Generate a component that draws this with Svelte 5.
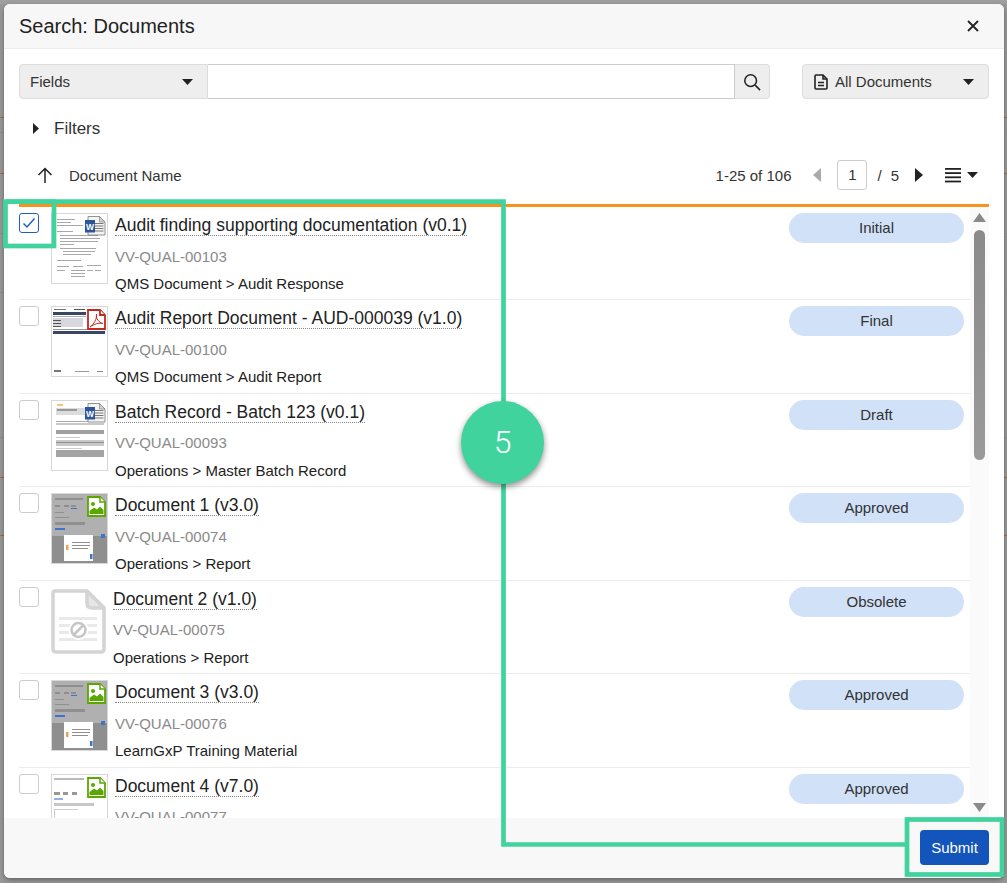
<script>
  const docs = [
    { title: 'Audit finding supporting documentation (v0.1)', id: 'VV-QUAL-00103', path: 'QMS Document > Audit Response', status: 'Initial', thumb: 'audit', icon: 'word', checked: true },
    { title: 'Audit Report Document - AUD-000039 (v1.0)', id: 'VV-QUAL-00100', path: 'QMS Document > Audit Report', status: 'Final', thumb: 'report', icon: 'pdf' },
    { title: 'Batch Record - Batch 123 (v0.1)', id: 'VV-QUAL-00093', path: 'Operations > Master Batch Record', status: 'Draft', thumb: 'batch', icon: 'word' },
    { title: 'Document 1 (v3.0)', id: 'VV-QUAL-00074', path: 'Operations > Report', status: 'Approved', thumb: 'screen', icon: 'image' },
    { title: 'Document 2 (v1.0)', id: 'VV-QUAL-00075', path: 'Operations > Report', status: 'Obsolete', thumb: 'none' },
    { title: 'Document 3 (v3.0)', id: 'VV-QUAL-00076', path: 'LearnGxP Training Material', status: 'Approved', thumb: 'screen', icon: 'image' },
    { title: 'Document 4 (v7.0)', id: 'VV-QUAL-00077', path: 'Operations > Report', status: 'Approved', thumb: 'light', icon: 'image' }
  ];
  const auditLines = [[6,6,18],[6,9,14],[6,12,26],[6,18,16],[9,22,38],[9,25,40],[9,28,38],[9,31,14],[9,35,36],[12,38,32],[12,41,28],[6,47,24],[6,53,12],[22,53,10],[36,52,8],[44,52,6],[6,57,8],[20,57,14],[36,57,6],[44,57,6],[20,60,14],[20,63,14]];
  const reportBars = [[3,3,12,1,'#777'],[23,3,11,1,'#555'],[2,6,33,3,'#3a4763'],[2,10,33,1,'#aab'],[2,12,30,9,'#d6d8dd'],[2,14,8,1,'#555'],[2,17,8,1,'#555'],[2,20,8,1,'#555'],[2,23,52,1,'#999'],[2,25,52,3,'#3a4763'],[3,64,7,2,'#777'],[24,65,14,1,'#999'],[46,65,6,1,'#888']];
  const batchBars = [[6,4,6,2,'#f5c27a'],[5,8,29,7,'#dcdcdc'],[6,9,20,2,'#999'],[5,21,34,1,'#aaa'],[5,23,48,2,'#c8c8c8'],[5,30,48,4,'#a0a0a0'],[5,37,24,1,'#ccc'],[5,40,48,6,'#c8c8c8'],[5,42,48,1,'#8f8f8f'],[5,48,26,1,'#ccc'],[5,50,48,7,'#a4a4a4']];
  const lightBars = [[3,4,30,2,'#bbb'],[3,18,6,3,'#999'],[12,18,5,3,'#999'],[21,18,5,3,'#999'],[3,24,9,2,'#8fb0e8'],[3,29,40,3,'#c8c8c8'],[3,35,24,1,'#ccc'],[3,35,1,20,'#ccc']];
  const listBars = [0, 1, 2, 3];
</script>

{#snippet fileIcon(kind)}
  {#if kind === 'word'}
    <path class="sheet" d="M37 3.500H48.500L54 9V22H37Z" />
    <path class="fold" d="M48.500 3.500V9H54Z" />
    {#each [10, 12.5, 15, 17.5] as y}<rect class="sheet-line" x="44" {y} width="8.500" height="1" />{/each}
    <rect class="word-box" x="34" y="7" width="10" height="12.500" />
    <text class="word-w" x="39" y="16.500">W</text>
  {:else if kind === 'pdf'}
    <path class="pdf-sheet" d="M37 4H49L54 9V23H37Z" />
    <path class="pdf-sheet" d="M49 4V9H54" />
    <path class="pdf-mark" d="M39 21C43 18 46 13 45.500 8C44.500 12 48 17 52 17.500C48 16.500 43 18 39 21Z" />
  {:else if kind === 'image'}
    <path class="img-sheet" d="M37 4H49L54 9V23H37Z" />
    <path class="img-fold" d="M49 4V9H54" />
    <circle class="img-fill" cx="42" cy="11" r="2" />
    <path class="img-fill" d="M38.500 21V18L43 14.500L46 16.500L49 13.500L52.500 17V21Z" />
  {/if}
{/snippet}

{#snippet thumbnail(doc)}
  {#if doc.thumb === 'none'}
    <svg class="blank" viewBox="0 0 55 65" aria-hidden="true">
      <path class="blank-page" d="M4 2H36L53 19V60Q53 63 50 63H5Q2 63 2 60V4Q2 2 4 2Z" />
      <path class="blank-fold" d="M36 2V14Q36 19 41 19H53Z" />
      {#each [28, 35, 42, 49] as y}<rect class="blank-line" x="8" {y} width="38" height="3" />{/each}
      <circle class="blank-white" cx="27.500" cy="41" r="10" />
      <circle class="blank-no" cx="27.500" cy="41" r="7" />
      <path class="blank-no" d="M22.500 46L32.500 36" />
    </svg>
  {:else}
    <svg class="thumb" viewBox="0 0 57 71" aria-hidden="true">
      <rect class="paper" x="0.500" y="0.500" width="56" height="70" />
      <g class="soft">
        {#if doc.thumb === 'audit'}
          {#each auditLines as l}<rect class="ink-light" x={l[0]} y={l[1]} width={l[2]} height="1" />{/each}
        {:else if doc.thumb === 'report'}
          {#each reportBars as b}<rect x={b[0]} y={b[1]} width={b[2]} height={b[3]} fill={b[4]} />{/each}
        {:else if doc.thumb === 'batch'}
          {#each batchBars as b}<rect x={b[0]} y={b[1]} width={b[2]} height={b[3]} fill={b[4]} />{/each}
        {:else if doc.thumb === 'screen'}
          <rect class="screen-top" x="1" y="1" width="55" height="42" />
          <rect class="screen-dim" x="1" y="43" width="55" height="27" />
          <rect class="ink" x="4" y="5" width="28" height="2" />
          <rect class="ink" x="4" y="12" width="5" height="2" />
          <rect class="ink" x="13" y="12" width="5" height="2" />
          <rect class="ink" x="20" y="12" width="5" height="2" />
          <rect class="link" x="20" y="15" width="6" height="1" />
          <rect class="ink" x="4" y="19" width="9" height="1" />
          <rect class="ink" x="4" y="24" width="14" height="1" />
          <rect class="ink" x="4" y="29" width="30" height="3" />
          <rect class="link" x="4" y="35" width="10" height="2" />
          <rect class="link" x="50" y="41" width="4" height="4" />
          <rect class="popup" x="13" y="42" width="29" height="26" />
          <rect class="warn" x="15" y="52" width="2.500" height="5" />
          <rect class="ink" x="21" y="49" width="18" height="1" />
          <rect class="ink" x="21" y="52" width="18" height="1" />
          <rect class="ink" x="21" y="55" width="16" height="1" />
          <rect class="link" x="39" y="61" width="2.500" height="5" />
        {:else}
          {#each lightBars as b}<rect x={b[0]} y={b[1]} width={b[2]} height={b[3]} fill={b[4]} />{/each}
        {/if}
      </g>
      {@render fileIcon(doc.icon)}
    </svg>
  {/if}
{/snippet}

<div class="backdrop">
  <main class="modal">
    <header class="modal-head">
      <h1>Search: Documents</h1>
      <svg class="close" viewBox="0 0 12 12" aria-hidden="true"><path d="M1 1L11 11M11 1L1 11" /></svg>
    </header>

    <section class="content">
      <div class="search-row">
        <div class="search-group">
          <div class="fields">
            <span>Fields</span>
            <svg class="caret" viewBox="0 0 11 6" aria-hidden="true"><path d="M0 0H11L5.500 6Z" /></svg>
          </div>
          <div class="search-input"></div>
          <div class="search-btn">
            <svg viewBox="0 0 20 20" aria-hidden="true"><circle cx="8.500" cy="8.500" r="6.500" /><path d="M13.500 13.500L19 19" /></svg>
          </div>
        </div>
        <div class="scope">
          <svg class="doc-icon" viewBox="0 0 14 16" aria-hidden="true"><path d="M2 1H9L13 5V14Q13 15 12 15H2Q1 15 1 14V2Q1 1 2 1Z" /><path d="M9 1V5H13M4 8.500H10M4 11.500H10" /></svg>
          <span>All Documents</span>
          <svg class="caret" viewBox="0 0 11 6" aria-hidden="true"><path d="M0 0H11L5.500 6Z" /></svg>
        </div>
      </div>

      <div class="filters">
        <svg viewBox="0 0 6 11" aria-hidden="true"><path d="M0 0L6 5.500L0 11Z" /></svg>
        <span>Filters</span>
      </div>

      <div class="table-head">
        <svg class="sort" viewBox="0 0 16 16" aria-hidden="true"><path d="M8 16V1.500M1.500 8L8 1.500L14.500 8" /></svg>
        <span class="col-name">Document Name</span>
        <div class="pager">
          <span class="range">1-25 of 106</span>
          <svg class="arrow off" viewBox="0 0 8 14" aria-hidden="true"><path d="M8 0V14L0 7Z" /></svg>
          <span class="page-box">1</span>
          <span class="slash">/</span>
          <span class="total">5</span>
          <svg class="arrow" viewBox="0 0 8 14" aria-hidden="true"><path d="M0 0V14L8 7Z" /></svg>
          <svg class="lines" viewBox="0 0 16 15" aria-hidden="true">
            {#each listBars as i}<rect x="0" y={i * 4.2} width="16" height="1.800" />{/each}
          </svg>
          <svg class="caret small" viewBox="0 0 11 6" aria-hidden="true"><path d="M0 0H11L5.500 6Z" /></svg>
        </div>
      </div>

      <div class="list-wrap">
        <ul class="rows">
          {#each docs as doc}
            <li class="row">
              <span class="check" class:checked={doc.checked}>
                {#if doc.checked}
                  <svg viewBox="0 0 14 12" aria-hidden="true"><path d="M1.500 6.500L5 10L12.500 1.500" /></svg>
                {/if}
              </span>
              <div class="thumb-cell">{@render thumbnail(doc)}</div>
              <div class="info">
                <div class="title-line"><span class="title">{doc.title}</span></div>
                <div class="doc-id">{doc.id}</div>
                <div class="doc-path">{doc.path}</div>
              </div>
              <span class="badge">{doc.status}</span>
            </li>
          {/each}
        </ul>
        <div class="scrollbar">
          <svg viewBox="0 0 13 9" aria-hidden="true"><path d="M6.500 0L13 9H0Z" /></svg>
          <div class="scroll-track"><div class="scroll-thumb"></div></div>
          <svg viewBox="0 0 13 9" aria-hidden="true"><path d="M0 0H13L6.500 9Z" /></svg>
        </div>
      </div>
    </section>

    <footer class="modal-foot">
      <button class="submit" type="button">Submit</button>
    </footer>
  </main>

  <svg class="annotation" viewBox="0 0 1007 883" aria-hidden="true">
    <path d="M5.500 201.700H503.500V844.500H907" />
    <rect x="5.500" y="201.700" width="48.500" height="44.300" />
    <rect x="907" y="819.500" width="95" height="55" />
  </svg>
  <div class="step">5</div>
</div>

<style>
  :global(body) {
    margin: 0;
    font-family: "Liberation Sans", Arial, sans-serif;
    color: #222;
  }

  .backdrop {
    position: relative;
    box-sizing: border-box;
    width: 1007px;
    height: 883px;
    padding: 4px 3px 5px 4px;
    overflow: hidden;
    background-color: #999;
    background-image:
      linear-gradient(#9f9f9f, #9f9f9f),
      linear-gradient(#a9702f, #a9702f),
      linear-gradient(#a9702f, #a9702f),
      linear-gradient(#a9702f, #a9702f),
      linear-gradient(#a9702f, #a9702f),
      linear-gradient(#8f8f8f, #8f8f8f),
      linear-gradient(#8f8f8f, #8f8f8f),
      linear-gradient(#8f8f8f, #8f8f8f),
      linear-gradient(#8f8f8f, #8f8f8f);
    background-size: 100% 4px, 100% 1px, 100% 1px, 100% 1px, 100% 1px, 100% 1px, 100% 1px, 100% 1px, 100% 1px;
    background-position: 0 0, 0 117px, 0 173px, 0 477px, 0 535px, 0 132px, 0 233px, 0 292px, 0 437px;
    background-repeat: no-repeat;
  }

  .modal {
    display: flex;
    flex-direction: column;
    height: 874px;
    overflow: hidden;
    border-radius: 6px;
    background: #fff;
    box-shadow: 0 2px 5px rgba(0, 0, 0, 0.35);
  }

  .modal-head {
    display: flex;
    flex: none;
    align-items: center;
    justify-content: space-between;
    box-sizing: border-box;
    height: 45px;
    padding: 0 25px 0 15px;
    border-bottom: 1px solid #ebebeb;
    background: #f7f7f7;
  }

  h1 {
    margin: 0;
    font-size: 20px;
    font-weight: 400;
    color: #222;
  }

  .close {
    width: 12px;
    height: 12px;
  }

  .close path {
    fill: none;
    stroke: #222;
    stroke-width: 1.800;
  }

  .content {
    display: flex;
    flex: 1;
    flex-direction: column;
    min-height: 0;
    padding: 15px 15px 0;
  }

  .search-row {
    display: flex;
    flex: none;
    justify-content: space-between;
    height: 35px;
  }

  .search-group {
    display: flex;
    width: 751px;
  }

  .fields {
    display: flex;
    align-items: center;
    justify-content: space-between;
    box-sizing: border-box;
    width: 189px;
    padding: 0 14px 0 10px;
    border: 1px solid #dcdcdc;
    border-radius: 4px 0 0 4px;
    background: #eee;
    font-size: 15px;
    color: #333;
  }

  .caret {
    flex: none;
    width: 11px;
    height: 6px;
    fill: #222;
  }

  .search-input {
    flex: 1;
    border: 1px solid #ccc;
    border-left: 0;
    background: #fff;
  }

  .search-btn {
    display: flex;
    align-items: center;
    justify-content: center;
    width: 35px;
    box-sizing: border-box;
    border: 1px solid #dcdcdc;
    border-left: 0;
    border-radius: 0 4px 4px 0;
    background: #eee;
  }

  .search-btn svg {
    width: 18px;
    height: 18px;
    fill: none;
    stroke: #222;
    stroke-width: 1.700;
  }

  .scope {
    display: flex;
    align-items: center;
    box-sizing: border-box;
    width: 187px;
    padding: 0 14px 0 11px;
    border: 1px solid #dcdcdc;
    border-radius: 4px;
    background: #eee;
    font-size: 15px;
    color: #333;
  }

  .scope span {
    flex: 1;
    margin-left: 7px;
  }

  .doc-icon {
    width: 14px;
    height: 16px;
    fill: none;
    stroke: #222;
    stroke-width: 1.600;
  }

  .filters {
    display: flex;
    flex: none;
    align-items: center;
    height: 29px;
    margin-top: 15px;
    padding-left: 14px;
    font-size: 17px;
    color: #333;
  }

  .filters svg {
    width: 6px;
    height: 11px;
    margin-right: 15px;
    fill: #222;
  }

  .table-head {
    display: flex;
    flex: none;
    align-items: center;
    box-sizing: border-box;
    height: 58px;
    margin-top: 3px;
    padding-right: 11px;
  }

  .sort {
    width: 16px;
    height: 16px;
    margin-left: 18px;
    fill: none;
    stroke: #222;
    stroke-width: 1.500;
  }

  .col-name {
    margin-left: 16px;
    font-size: 15px;
    color: #333;
  }

  .pager {
    display: flex;
    align-items: center;
    margin-left: auto;
    font-size: 15px;
    color: #333;
  }

  .arrow {
    width: 8px;
    height: 14px;
    margin-left: 22px;
    fill: #222;
  }

  .arrow.off {
    fill: #aaa;
  }

  .page-box {
    box-sizing: border-box;
    width: 30px;
    height: 30px;
    margin-left: 16px;
    border: 1px solid #ccc;
    border-radius: 3px;
    line-height: 28px;
    text-align: center;
  }

  .slash {
    margin-left: 10px;
  }

  .total {
    margin-left: 9px;
  }

  .total + .arrow {
    margin-left: 16px;
  }

  .lines {
    width: 16px;
    height: 15px;
    margin-left: 22px;
    fill: #222;
  }

  .caret.small {
    margin-left: 6px;
  }

  .list-wrap {
    display: flex;
    flex: 1;
    min-height: 0;
    border-top: 3px solid #f7931e;
  }

  .rows {
    flex: 1;
    min-width: 0;
    margin: 0;
    padding: 0;
    overflow: hidden;
    list-style: none;
  }

  .row {
    display: flex;
    box-sizing: border-box;
    height: 93.500px;
    padding-top: 6px;
    border-bottom: 1px solid #ececec;
  }

  .row:first-child {
    height: 93px;
  }

  .check {
    display: flex;
    flex: none;
    align-items: center;
    justify-content: center;
    box-sizing: border-box;
    width: 20px;
    height: 20px;
    border: 1px solid #ccc;
    border-radius: 3px;
    background: #fff;
  }

  .check.checked {
    border-color: #1d5fbf;
  }

  .check svg {
    width: 14px;
    height: 12px;
    fill: none;
    stroke: #1d5fbf;
    stroke-width: 1.500;
  }

  .thumb-cell {
    flex: none;
    margin-left: 12px;
    margin-right: 7px;
  }

  .thumb {
    display: block;
    width: 57px;
    height: 71px;
  }

  .blank {
    display: block;
    width: 55px;
    height: 65px;
    margin-top: 2px;
  }

  .paper {
    fill: #fff;
    stroke: #d8d8d8;
  }

  .soft {
    filter: blur(0.45px);
  }

  .ink {
    fill: #8f8f8f;
  }

  .ink-light {
    fill: #a8a8a8;
  }

  .link {
    fill: #3f74c9;
  }

  .warn {
    fill: #e9a45a;
  }

  .screen-top {
    fill: #b0b0b0;
  }

  .screen-dim {
    fill: #8f8f8f;
  }

  .popup {
    fill: #fff;
  }

  .sheet {
    fill: #f4f4f4;
    stroke: #777;
    stroke-width: 0.800;
  }

  .fold {
    fill: #cfd3da;
    stroke: #777;
    stroke-width: 0.600;
  }

  .sheet-line {
    fill: #777;
  }

  .word-box {
    fill: #2b579a;
  }

  .word-w {
    font-size: 8.500px;
    font-weight: 700;
    fill: #fff;
    text-anchor: middle;
  }

  .pdf-sheet {
    fill: #fff;
    stroke: #c5281c;
    stroke-width: 1.800;
  }

  .pdf-mark {
    fill: none;
    stroke: #c5281c;
    stroke-width: 1;
  }

  .img-sheet {
    fill: #fff;
    stroke: #5aa700;
    stroke-width: 1.800;
  }

  .img-fold {
    fill: #fff;
    stroke: #5aa700;
    stroke-width: 1.500;
  }

  .img-fill {
    fill: #5aa700;
  }

  .blank-page {
    fill: #fff;
    stroke: #d4d4d4;
    stroke-width: 3.500;
    stroke-linejoin: round;
  }

  .blank-fold {
    fill: #e6e6e6;
    stroke: #d4d4d4;
    stroke-width: 3.500;
    stroke-linejoin: round;
  }

  .blank-line {
    fill: #e9e9e9;
  }

  .blank-white {
    fill: #fff;
  }

  .blank-no {
    fill: none;
    stroke: #c6c6c6;
    stroke-width: 2.500;
  }

  .info {
    flex: 1;
    min-width: 0;
  }

  .title-line {
    height: 24px;
    line-height: 24px;
  }

  .title {
    display: inline-block;
    height: 22px;
    border-bottom: 1px dotted #888;
    font-size: 17.500px;
    line-height: 24px;
    color: #222;
  }

  .doc-id {
    margin-top: 10.500px;
    font-size: 15px;
    line-height: 18px;
    color: #8a8a8a;
  }

  .doc-path {
    margin-top: 9.500px;
    font-size: 15px;
    line-height: 18px;
    color: #222;
  }

  .badge {
    flex: none;
    box-sizing: border-box;
    width: 175px;
    height: 30px;
    margin-right: 6px;
    border-radius: 15px;
    background: #d1e1f8;
    font-size: 15px;
    line-height: 30px;
    text-align: center;
    color: #333;
  }

  .scrollbar {
    display: flex;
    flex: none;
    flex-direction: column;
    align-items: center;
    box-sizing: border-box;
    width: 19px;
    padding: 6px 0 6px;
    background: #fafafa;
  }

  .scrollbar svg {
    flex: none;
    width: 13px;
    height: 9px;
    fill: #8a8a8a;
  }

  .scroll-track {
    flex: 1;
    width: 11px;
    padding-top: 8px;
  }

  .scroll-thumb {
    width: 11px;
    height: 230px;
    border-radius: 6px;
    background: linear-gradient(#8a8a8a, #9a9a9a);
  }

  .modal-foot {
    display: flex;
    flex: none;
    align-items: center;
    justify-content: flex-end;
    box-sizing: border-box;
    height: 60px;
    padding: 0 15px 1px;
    background: #f8f8f8;
  }

  .submit {
    width: 69px;
    height: 35px;
    padding: 0;
    border: 0;
    border-radius: 4px;
    background: #1455bb;
    font: 15px "Liberation Sans", Arial, sans-serif;
    color: #fff;
  }

  .annotation {
    position: absolute;
    top: 0;
    left: 0;
    width: 1007px;
    height: 883px;
    fill: none;
    stroke: #40d39e;
    stroke-width: 4.700;
    pointer-events: none;
  }

  .step {
    position: absolute;
    top: 400.500px;
    left: 461px;
    width: 83px;
    height: 83px;
    border-radius: 50%;
    background: #40d39e;
    box-shadow: 0 3px 6px rgba(0, 0, 0, 0.45);
    font: 300 32px/83px Roboto, sans-serif;
    text-align: center;
    color: #fff;
  }
</style>
